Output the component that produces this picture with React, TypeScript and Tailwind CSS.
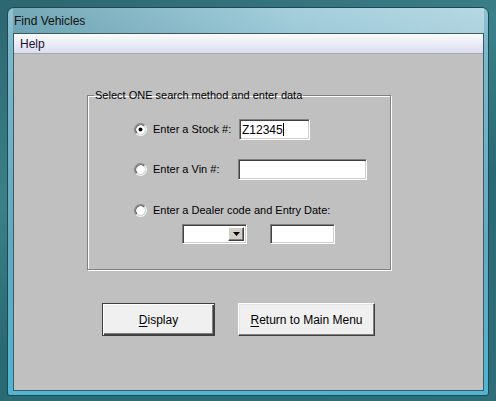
import React from 'react';

const Radio: React.FC<{ checked?: boolean }> = ({ checked }) => (
  <svg width="13" height="13" viewBox="0 0 12 12" className="shrink-0">
    <circle cx="6" cy="6" r="4.5" fill="#fff" />
    <path d="M2.11 9.89 A5.5 5.5 0 0 1 9.89 2.11" fill="none" stroke="#8a8a8a" strokeWidth="1" />
    <path d="M9.89 2.11 A5.5 5.5 0 0 1 2.11 9.89" fill="none" stroke="#f4f4f4" strokeWidth="1" />
    <path d="M2.82 9.18 A4.5 4.5 0 0 1 9.18 2.82" fill="none" stroke="#5a5a5a" strokeWidth="1" />
    <path d="M9.18 2.82 A4.5 4.5 0 0 1 2.82 9.18" fill="none" stroke="#d8d8d8" strokeWidth="1" />
    {checked && <circle cx="6" cy="6" r="1.8" fill="#000" />}
  </svg>
);

const sunken =
  'bg-white border border-t-[#808080] border-l-[#808080] border-r-white border-b-white shadow-[inset_1px_1px_0_#404040,inset_-1px_-1px_0_#d4d0c8]';

export default function App() {
  return (
    <div
      className="w-[496px] h-[401px] overflow-hidden pl-[7px] pt-[7px] bg-[linear-gradient(160deg,#2c6670_0%,#3b808a_35%,#2a6a74_60%,#2f6e78_100%)]"
      style={{ fontFamily: '"Liberation Sans", Arial, sans-serif' }}
    >
      {/* Window frame */}
      <div className="flex flex-col w-[482px] h-[389px] rounded-t-[7px] rounded-b-[3px] border border-[#1f4852] pl-[5px] pr-[4px] pb-[4px] bg-[linear-gradient(180deg,#8fc3d3_0%,#7db8cb_10%,#62a9c0_60%,#4fb5d2_100%)]">
        <div className="h-[25px] flex items-center pl-[1px] text-[12px] text-[#101010] bg-[linear-gradient(90deg,rgba(40,90,100,0.25)_0%,rgba(255,255,255,0.2)_60%,rgba(255,255,255,0.35)_100%)]">
          Find Vehicles
        </div>

        {/* Client area */}
        <div className="flex flex-col flex-1 border border-[#3a5a66] bg-[#c0c0c0]">
          <div className="h-[20px] flex items-center pl-[6px] text-[12px] text-[#1a1030] border-b border-[#a4a6b4] bg-[linear-gradient(180deg,#fbfbfd_0%,#eceef8_45%,#dadeef_100%)]">
            Help
          </div>

          <fieldset className="ml-[73px] mt-[34px] w-[304px] h-[182px] border border-[#808080] shadow-[1px_1px_0_#fff,inset_1px_1px_0_#fff]">
            <legend className="ml-[6px] px-[1px] text-[11px] leading-[14px] text-black">
              Select ONE search method and enter data
            </legend>

            <div className="pl-[46px] text-[11px] text-black">
              <div className="mt-[17px] flex items-center h-[21px]">
                <Radio checked />
                <span className="ml-[6px] w-[86px]">Enter a Stock #:</span>
                <div className={`${sunken} w-[71px] h-[21px] flex items-center pl-[2px] text-[12px]`}>
                  Z12345
                  <span className="w-px h-[13px] bg-black" />
                </div>
              </div>

              <div className="mt-[19px] flex items-center h-[21px]">
                <Radio />
                <span className="ml-[6px] w-[85px]">Enter a Vin #:</span>
                <div className={`${sunken} w-[129px] h-[21px]`} />
              </div>

              <div className="mt-[20px] flex items-center h-[21px]">
                <Radio />
                <span className="ml-[6px]">Enter a Dealer code and Entry Date:</span>
              </div>

              <div className="mt-[3px] ml-[48px] flex items-center gap-[23px]">
                <div className={`${sunken} w-[65px] h-[20px] flex justify-end items-stretch p-[2px]`}>
                  <div className="w-[16px] bg-[#d4d0c8] border border-t-white border-l-white border-r-[#404040] border-b-[#404040] shadow-[inset_-1px_-1px_0_#808080] flex items-center justify-center">
                    <svg width="7" height="4" viewBox="0 0 7 4">
                      <path d="M0 0 H7 L3.5 4 Z" fill="#000" />
                    </svg>
                  </div>
                </div>
                <div className={`${sunken} w-[65px] h-[20px]`} />
              </div>
            </div>
          </fieldset>

          <div className="mt-[33px] ml-[88px] flex gap-[23px] text-[12px] text-black">
            <button className="w-[113px] h-[33px] bg-[#f0f0f0] border border-[#404040] shadow-[inset_1px_1px_0_#fff,inset_-1px_-1px_0_#404040,inset_-2px_-2px_0_#808080]">
              <span className="underline underline-offset-2">D</span>isplay
            </button>
            <button className="w-[137px] h-[33px] bg-[#f0f0f0] border border-t-white border-l-white border-r-[#404040] border-b-[#404040] shadow-[inset_-1px_-1px_0_#808080,inset_1px_1px_0_#e4e4e4]">
              <span className="underline underline-offset-2">R</span>eturn to Main Menu
            </button>
          </div>
        </div>
      </div>
    </div>
  );
}
